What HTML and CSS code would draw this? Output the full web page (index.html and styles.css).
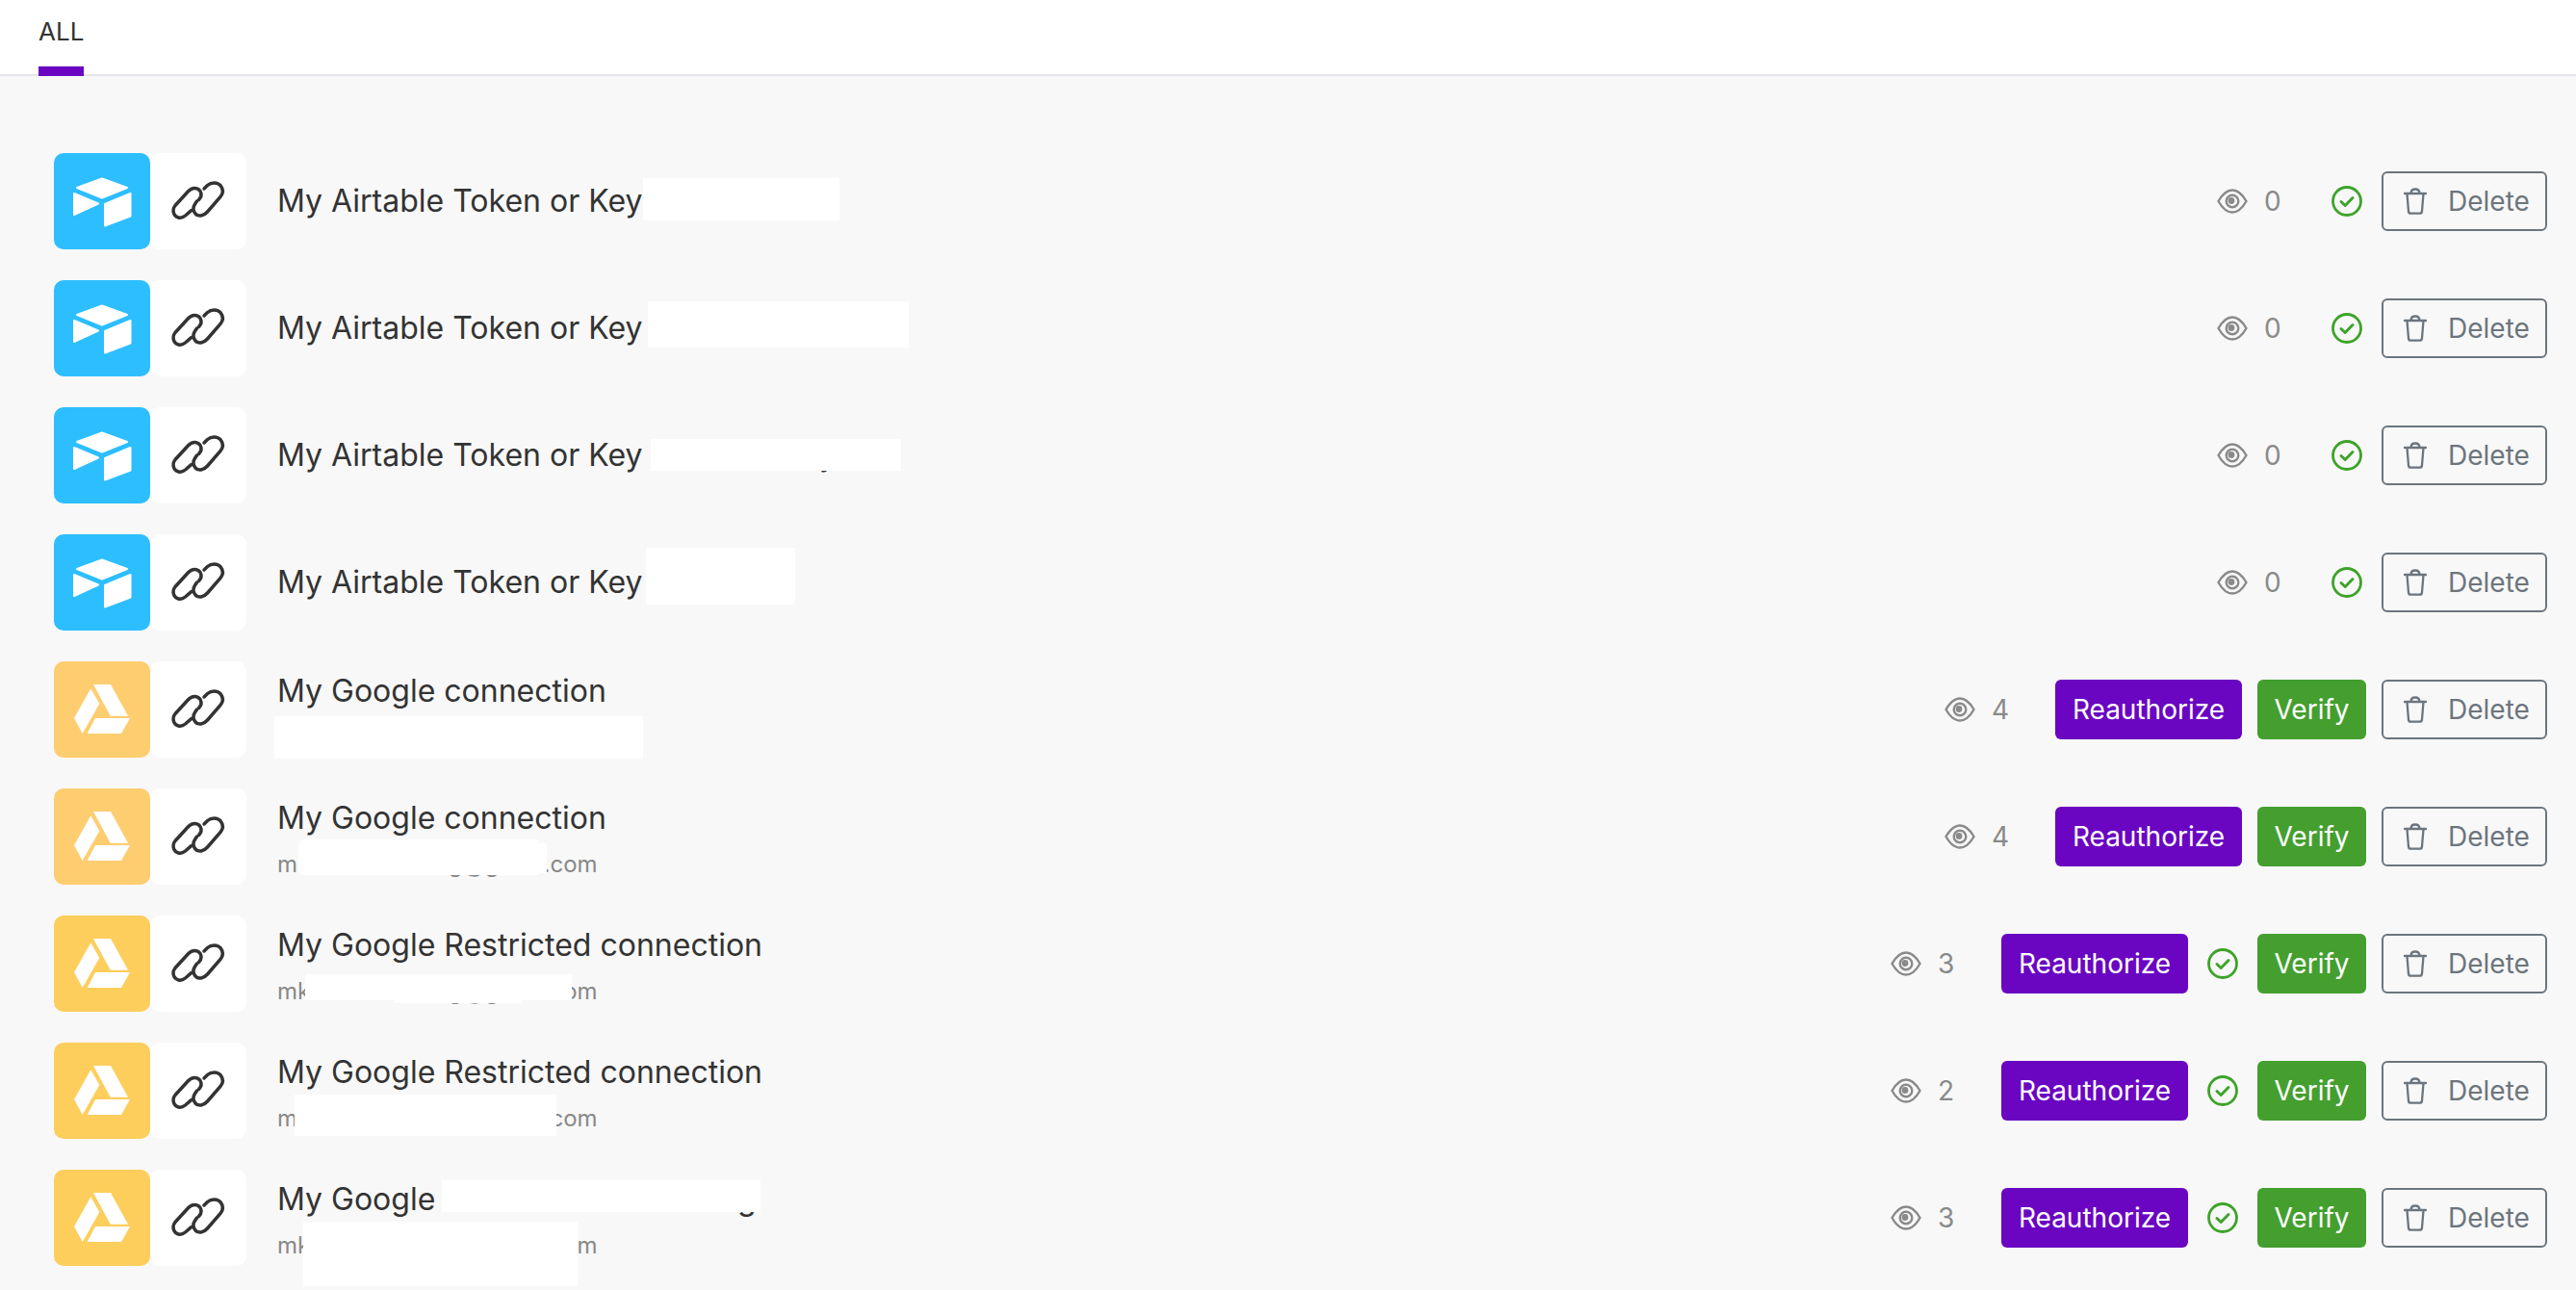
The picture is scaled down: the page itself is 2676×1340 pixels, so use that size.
FILE: index.html
```html
<!DOCTYPE html>
<html lang="en">
<head>
    <meta charset="UTF-8">
    <title>Connections</title>
    <link rel="stylesheet" href="styles.css">
</head>
<body>

    <svg class="sprites" xmlns="http://www.w3.org/2000/svg">
        <symbol id="i-airtable" viewBox="0 0 100 100">
            <path d="M24 36 50 26.500 76 36 50 46.500Z"/>
            <path d="M21 42 46 52.500 21 64Z"/>
            <path d="M53 53 79.500 42V65.500L53 75.500Z"/>
        </symbol>
        <symbol id="i-drive" viewBox="0 0 100 100">
            <path d="M21 59 38.300 28.300 47.300 44 29.700 75Z"/>
            <path d="M41 24H59L77 56.700H58.700Z"/>
            <path d="M43 59H79L70 75H34.700Z"/>
        </symbol>
        <symbol id="i-link" viewBox="0 0 100 100">
            <g fill="none" stroke="#333" stroke-width="3.500" stroke-linecap="round">
                <path d="M42.700 59.700 36.500 65C31.500 69 26.500 67 24.700 63 23.300 59.500 24 57 26 54.500L39.500 39.800C43.500 35.500 49 35.500 52 39.500 53.700 42.800 53 46 50.500 48.500"/>
                <path d="M56 37 59.500 33.500C63.500 30 70 30 73 33.700 76 37.500 75.800 42 73 45.500L59.500 61C55.500 65.500 50 66.500 47 63 44.500 60 44.500 56 46.500 53L48.500 50"/>
            </g>
        </symbol>
        <symbol id="i-eye" viewBox="0 0 32 26">
            <path d="M1.500 13C6 5 11 1.500 16 1.500S26 5 30.500 13C26 21 21 24.500 16 24.500S6 21 1.500 13Z" fill="none" stroke="currentColor" stroke-width="2.400"/>
            <circle cx="16" cy="13" r="6.300" fill="none" stroke="currentColor" stroke-width="2.400"/>
            <circle cx="15" cy="12.500" r="3.400" fill="currentColor"/>
        </symbol>
        <symbol id="i-check" viewBox="0 0 32 32">
            <circle cx="16" cy="16" r="14.500" fill="none" stroke="currentColor" stroke-width="2.800"/>
            <path d="M10 16.500 14.200 20.500 22 12.500" fill="none" stroke="currentColor" stroke-width="3" stroke-linecap="round" stroke-linejoin="round"/>
        </symbol>
        <symbol id="i-trash" viewBox="0 0 24 28">
            <path d="M1 6H23M7.500 6C7.500 2.500 9 1.500 12 1.500S16.500 2.500 16.500 6M3.500 6 5 24.500C5.200 26 6 26.700 7.500 26.700H16.500C18 26.700 18.800 26 19 24.500L20.500 6" fill="none" stroke="currentColor" stroke-width="2.300" stroke-linecap="round"/>
        </symbol>
    </svg>

    <nav class="tabs">
        <a class="tab active">ALL</a>
    </nav>

    <main class="list">

        <div class="row">
            <div class="app airtable"><svg><use href="#i-airtable"/></svg></div>
            <div class="app chain"><svg><use href="#i-link"/></svg></div>
            <div class="name"><div class="title">My Airtable Token or Key</div></div>
            <div class="actions">
                <div class="views"><svg class="eye"><use href="#i-eye"/></svg>0</div>
                <svg class="check"><use href="#i-check"/></svg>
                <button class="btn btn-delete"><svg class="trash"><use href="#i-trash"/></svg>Delete</button>
            </div>
            <div class="mask m1"></div>
        </div>

        <div class="row">
            <div class="app airtable"><svg><use href="#i-airtable"/></svg></div>
            <div class="app chain"><svg><use href="#i-link"/></svg></div>
            <div class="name"><div class="title">My Airtable Token or Key</div></div>
            <div class="actions">
                <div class="views"><svg class="eye"><use href="#i-eye"/></svg>0</div>
                <svg class="check"><use href="#i-check"/></svg>
                <button class="btn btn-delete"><svg class="trash"><use href="#i-trash"/></svg>Delete</button>
            </div>
            <div class="mask m2"></div>
        </div>

        <div class="row">
            <div class="app airtable"><svg><use href="#i-airtable"/></svg></div>
            <div class="app chain"><svg><use href="#i-link"/></svg></div>
            <div class="name"><div class="title">My Airtable Token or Key xxxxxxxxxxy</div></div>
            <div class="actions">
                <div class="views"><svg class="eye"><use href="#i-eye"/></svg>0</div>
                <svg class="check"><use href="#i-check"/></svg>
                <button class="btn btn-delete"><svg class="trash"><use href="#i-trash"/></svg>Delete</button>
            </div>
            <div class="mask m3"></div>
        </div>

        <div class="row">
            <div class="app airtable"><svg><use href="#i-airtable"/></svg></div>
            <div class="app chain"><svg><use href="#i-link"/></svg></div>
            <div class="name"><div class="title">My Airtable Token or Key</div></div>
            <div class="actions">
                <div class="views"><svg class="eye"><use href="#i-eye"/></svg>0</div>
                <svg class="check"><use href="#i-check"/></svg>
                <button class="btn btn-delete"><svg class="trash"><use href="#i-trash"/></svg>Delete</button>
            </div>
            <div class="mask m4"></div>
        </div>

        <div class="row">
            <div class="app drive faded"><svg><use href="#i-drive"/></svg></div>
            <div class="app chain"><svg><use href="#i-link"/></svg></div>
            <div class="name two-line">
                <div class="title">My Google connection</div>
                <div class="email">mkxxxxxxxxxxxg@gmail.com</div>
            </div>
            <div class="actions">
                <div class="views"><svg class="eye"><use href="#i-eye"/></svg>4</div>
                <button class="btn btn-reauth">Reauthorize</button>
                <button class="btn btn-verify">Verify</button>
                <button class="btn btn-delete"><svg class="trash"><use href="#i-trash"/></svg>Delete</button>
            </div>
            <div class="mask m5"></div>
        </div>

        <div class="row">
            <div class="app drive faded"><svg><use href="#i-drive"/></svg></div>
            <div class="app chain"><svg><use href="#i-link"/></svg></div>
            <div class="name two-line">
                <div class="title">My Google connection</div>
                <div class="email">mkxxxxxxxxxxxg@gmail.com</div>
            </div>
            <div class="actions">
                <div class="views"><svg class="eye"><use href="#i-eye"/></svg>4</div>
                <button class="btn btn-reauth">Reauthorize</button>
                <button class="btn btn-verify">Verify</button>
                <button class="btn btn-delete"><svg class="trash"><use href="#i-trash"/></svg>Delete</button>
            </div>
            <div class="mask m6a"></div>
            <div class="mask m6b"></div>
        </div>

        <div class="row">
            <div class="app drive"><svg><use href="#i-drive"/></svg></div>
            <div class="app chain"><svg><use href="#i-link"/></svg></div>
            <div class="name two-line">
                <div class="title">My Google Restricted connection</div>
                <div class="email">mkxxxxxxxxxxxg@gmail.com</div>
            </div>
            <div class="actions">
                <div class="views"><svg class="eye"><use href="#i-eye"/></svg>3</div>
                <button class="btn btn-reauth">Reauthorize</button>
                <svg class="check"><use href="#i-check"/></svg>
                <button class="btn btn-verify">Verify</button>
                <button class="btn btn-delete"><svg class="trash"><use href="#i-trash"/></svg>Delete</button>
            </div>
            <div class="mask m7a"></div>
            <div class="mask m7b"></div>
        </div>

        <div class="row">
            <div class="app drive"><svg><use href="#i-drive"/></svg></div>
            <div class="app chain"><svg><use href="#i-link"/></svg></div>
            <div class="name two-line">
                <div class="title">My Google Restricted connection</div>
                <div class="email">mkxxxxxxxxxxxg@gmail.com</div>
            </div>
            <div class="actions">
                <div class="views"><svg class="eye"><use href="#i-eye"/></svg>2</div>
                <button class="btn btn-reauth">Reauthorize</button>
                <svg class="check"><use href="#i-check"/></svg>
                <button class="btn btn-verify">Verify</button>
                <button class="btn btn-delete"><svg class="trash"><use href="#i-trash"/></svg>Delete</button>
            </div>
            <div class="mask m8"></div>
        </div>

        <div class="row">
            <div class="app drive"><svg><use href="#i-drive"/></svg></div>
            <div class="app chain"><svg><use href="#i-link"/></svg></div>
            <div class="name two-line">
                <div class="title">My Google Restricted monitoring</div>
                <div class="email">mkxxxxxxxxxxxg@gmail.com</div>
            </div>
            <div class="actions">
                <div class="views"><svg class="eye"><use href="#i-eye"/></svg>3</div>
                <button class="btn btn-reauth">Reauthorize</button>
                <svg class="check"><use href="#i-check"/></svg>
                <button class="btn btn-verify">Verify</button>
                <button class="btn btn-delete"><svg class="trash"><use href="#i-trash"/></svg>Delete</button>
            </div>
            <div class="mask m9a"></div>
            <div class="mask m9b"></div>
        </div>

    </main>

</body>
</html>
```

FILE: styles.css
```css
body {
    margin: 0;
    background-color: #f8f8f8;
    color: #333;
    font-family: Inter, "Noto Sans", sans-serif;
    height: 1340px;
    overflow: hidden;
}

.sprites {
    display: none;
}

/* tabs */
.tabs {
    display: flex;
    height: 77px;
    padding-left: 40px;
    background-color: #fff;
    border-bottom: 2px solid #e4e4ea;
}

.tab {
    height: 79px;
    box-sizing: border-box;
    padding-top: 18px;
    font-size: 26px;
    line-height: 30px;
    border-bottom: 10px solid #6a06c2;
}

/* list */
.list {
    display: flex;
    flex-direction: column;
    gap: 32px;
    padding: 80px 30px 0 56px;
}

.row {
    display: flex;
    align-items: center;
    height: 100px;
    position: relative;
}

.app {
    width: 100px;
    height: 100px;
    border-radius: 10px;
    flex-shrink: 0;
}

.app svg {
    display: block;
    width: 100px;
    height: 100px;
}

.airtable {
    background-color: #2dbeff;
    fill: #fff;
    stroke: #fff;
    stroke-width: 2;
    stroke-linejoin: round;
}

.drive {
    background-color: #fdce5c;
    fill: #fff;
}

.drive.faded {
    background-color: #fecd70;
}

.chain {
    background-color: #fff;
}

.name {
    flex: 1;
    padding-left: 32px;
}

.two-line {
    padding-top: 10px;
}

.title {
    font-size: 32px;
    line-height: 48px;
    white-space: nowrap;
}

.email {
    font-size: 24px;
    line-height: 48px;
    color: #888;
}

/* right side */
.actions {
    display: flex;
    align-items: center;
    gap: 16px;
}

.views {
    display: flex;
    align-items: center;
    width: 99px;
    color: #8a8a8a;
    font-size: 28px;
}

.eye {
    width: 32px;
    height: 26px;
    margin-right: 17px;
}

.check {
    width: 32px;
    height: 32px;
    margin: 0 4px;
    color: #3ea32a;
}

.trash {
    width: 24px;
    height: 28px;
    margin-right: 22px;
}

.btn {
    display: flex;
    align-items: center;
    justify-content: center;
    box-sizing: border-box;
    height: 62px;
    border: 0;
    border-radius: 6px;
    font-family: inherit;
    font-size: 28px;
}

.btn-reauth {
    width: 194px;
    background-color: #6a06c2;
    color: #fff;
}

.btn-verify {
    width: 113px;
    background-color: #449f2f;
    color: #fff;
}

.btn-delete {
    justify-content: flex-start;
    width: 172px;
    padding: 0 0 0 21px;
    background-color: transparent;
    border: 2px solid #6c757d;
    color: #6c757d;
}

/* white boxes laid over private values */
.mask {
    position: absolute;
    background-color: #fff;
}

.m1 { left: 612px; top: 26px; width: 204px; height: 44px; }
.m2 { left: 617px; top: 22px; width: 271px; height: 48px; }
.m3 { left: 620px; top: 33px; width: 260px; height: 33px; }
.m4 { left: 615px; top: 14px; width: 155px; height: 59px; }
.m5 { left: 229px; top: 57px; width: 383px; height: 44px; }
.m6a { left: 257px; top: 53px; width: 247px; height: 37px; }
.m6b { left: 254px; top: 57px; width: 258px; height: 31px; }
.m7a { left: 261px; top: 61px; width: 277px; height: 27px; }
.m7b { left: 354px; top: 61px; width: 131px; height: 30px; }
.m8 { left: 250px; top: 54px; width: 272px; height: 43px; }
.m9a { left: 403px; top: 11px; width: 331px; height: 33px; }
.m9b { left: 259px; top: 54px; width: 285px; height: 67px; }
```
